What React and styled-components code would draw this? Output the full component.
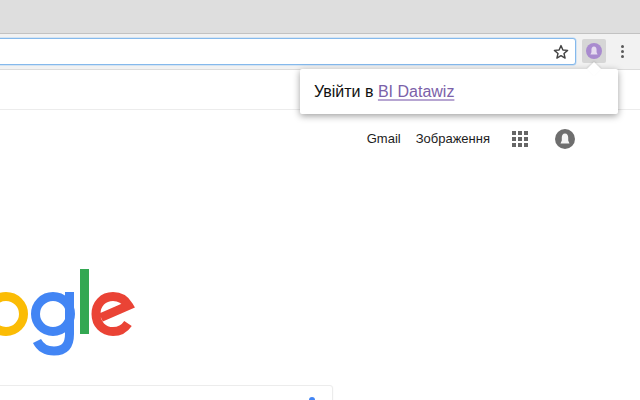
import React from 'react'
import styled, { createGlobalStyle } from 'styled-components'

const GlobalStyle = createGlobalStyle`
  html, body {
    margin: 0;
    padding: 0;
    width: 640px;
    height: 400px;
    overflow: hidden;
    background: #fff;
    font-family: "Liberation Sans", Arial, sans-serif;
  }
`

const Page = styled.div`
  position: relative;
  width: 640px;
  height: 400px;
  overflow: hidden;
  display: flex;
  flex-direction: column;
`

const TabStrip = styled.div`
  flex: none;
  height: 33px;
  background: #dedede;
  border-bottom: 1px solid #c2c2c2;
`

const Toolbar = styled.div`
  flex: none;
  height: 36px;
  box-sizing: border-box;
  background: #f2f2f2;
  border-bottom: 1px solid #dcdcdc;
  display: flex;
  align-items: center;
`

const Omnibox = styled.div`
  flex: none;
  width: 580px;
  height: 27px;
  margin-left: -4px;
  box-sizing: border-box;
  background: #fff;
  border: 1px solid #85b9ec;
  border-radius: 3px;
  box-shadow: 0 0 0 0.5px #b5d5f4;
  display: flex;
  align-items: center;
  justify-content: flex-end;
  padding-right: 6px;
`

const ExtensionButton = styled.div`
  flex: none;
  width: 24px;
  height: 24px;
  margin: 0 0 1px 6px;
  background: #d6d6d6;
  border-radius: 2px;
  display: flex;
  align-items: center;
  justify-content: center;
`

const MenuButton = styled.div`
  flex: none;
  margin-left: 15px;
  display: flex;
  flex-direction: column;
  gap: 2px;
`

const Dot = styled.span`
  width: 3px;
  height: 3px;
  border-radius: 50%;
  background: #5a5a5a;
`

const BookmarksBar = styled.div`
  flex: none;
  height: 39px;
  background: #fff;
  border-bottom: 1px solid #ececec;
`

const Content = styled.main`
  flex: none;
  display: flex;
  flex-direction: column;
  background: #fff;
`

const TopLinks = styled.nav`
  flex: none;
  height: 57px;
  padding-right: 65px;
  display: flex;
  align-items: center;
  justify-content: flex-end;
`

const TopLink = styled.a`
  font-size: 13px;
  color: #1c1c1c;
  margin-right: ${p => p.$gap}px;
`

const AppsGrid = styled.div`
  display: grid;
  grid-template-columns: repeat(3, 4px);
  grid-auto-rows: 4px;
  gap: 2px;
  margin-right: 27px;
`

const AppsCell = styled.span`
  background: #666;
`

const Logo = styled.svg`
  display: block;
  margin-top: 98px;
  flex: none;
`

const SearchBox = styled.div`
  flex: none;
  width: 337px;
  height: 40px;
  margin-top: 25px;
  margin-left: -4px;
  box-sizing: border-box;
  background: #fff;
  border: 1px solid #ececec;
  border-radius: 3px;
  box-shadow: 0 1px 2px rgba(0, 0, 0, 0.06);
  display: flex;
  justify-content: flex-end;
  padding: 11px 17px 0 0;
`

const MicTip = styled.span`
  width: 6px;
  height: 6px;
  border-radius: 3px 3px 0 0;
  background: #4285f4;
`

const Popup = styled.div`
  position: absolute;
  left: 300px;
  top: 69px;
  width: 318px;
  height: 45px;
  box-sizing: border-box;
  padding-left: 14px;
  background: #fff;
  border-radius: 2px;
  box-shadow: 0 2px 7px rgba(0, 0, 0, 0.38);
  display: flex;
  align-items: center;
  font-size: 16px;
  color: #111;
  white-space: pre;

  &::before {
    content: '';
    position: absolute;
    left: 289px;
    top: -5px;
    width: 10px;
    height: 10px;
    background: #fff;
    transform: rotate(45deg);
    box-shadow: -1px -1px 2px rgba(0, 0, 0, 0.1);
  }
`

const PopupLink = styled.a`
  position: relative;
  color: #7b61a9;
  text-decoration: underline;
  text-decoration-color: #b7a6d2;
  text-decoration-thickness: 2px;
  text-underline-offset: 2px;
`

const Star = () => (
  <svg width="16" height="16" viewBox="0 0 16 16" fill="none">
    <path d="M8 1.6l1.9 4.4 4.7.4-3.6 3.1 1.1 4.6L8 11.6l-4.1 2.5 1.1-4.6-3.6-3.1 4.7-.4z" stroke="#444" strokeWidth="1.4" strokeLinejoin="round" />
  </svg>
)

const Bell = ({ size, bg, fg }) => (
  <svg width={size} height={size} viewBox="0 0 20 20">
    <circle cx="10" cy="10" r="10" fill={bg} />
    <path d="M10 4.500C7.800 4.500 6.800 6.300 6.800 8.500V11.500L5.500 14.500H14.500L13.200 11.500V8.500C13.200 6.300 12.200 4.500 10 4.500Z" fill={fg} />
  </svg>
)

const GoogleLogo = () => (
  <Logo width="140" height="95" viewBox="0 265 140 95" fill="none" strokeWidth="9">
    <circle cx="6" cy="314" r="17.500" stroke="#fbbc05" />
    <circle cx="53" cy="314" r="17.500" stroke="#4285f4" />
    <path d="M69.500 292V334C69.500 347 63 351 54 351C46 351 40 347 37 341" stroke="#4285f4" />
    <path d="M84.500 269V334" stroke="#34a853" />
    <path d="M101 317.500L128.500 305.500C125 299.500 120 296.500 113 296.500C103 296.500 96 304 96 314C96 324 103 331.500 113 331.500C120 331.500 125 328 128 323.500" stroke="#ea4335" />
  </Logo>
)

export default function App() {
  return (
    <Page>
      <GlobalStyle />
      <TabStrip />
      <Toolbar>
        <Omnibox>
          <Star />
        </Omnibox>
        <ExtensionButton>
          <Bell size={16} bg="#a98bcf" fg="#e6dcf0" />
        </ExtensionButton>
        <MenuButton>
          <Dot />
          <Dot />
          <Dot />
        </MenuButton>
      </Toolbar>
      <BookmarksBar />
      <Content>
        <TopLinks>
          <TopLink $gap={15}>Gmail</TopLink>
          <TopLink $gap={22}>Зображення</TopLink>
          <AppsGrid>
            {Array.from({ length: 9 }, (_, i) => <AppsCell key={i} />)}
          </AppsGrid>
          <Bell size={20} bg="#6e6e6e" fg="#f4f4f4" />
        </TopLinks>
        <GoogleLogo />
        <SearchBox>
          <MicTip />
        </SearchBox>
      </Content>
      <Popup>
        Увійти в <PopupLink>BI Datawiz</PopupLink>
      </Popup>
    </Page>
  )
}
